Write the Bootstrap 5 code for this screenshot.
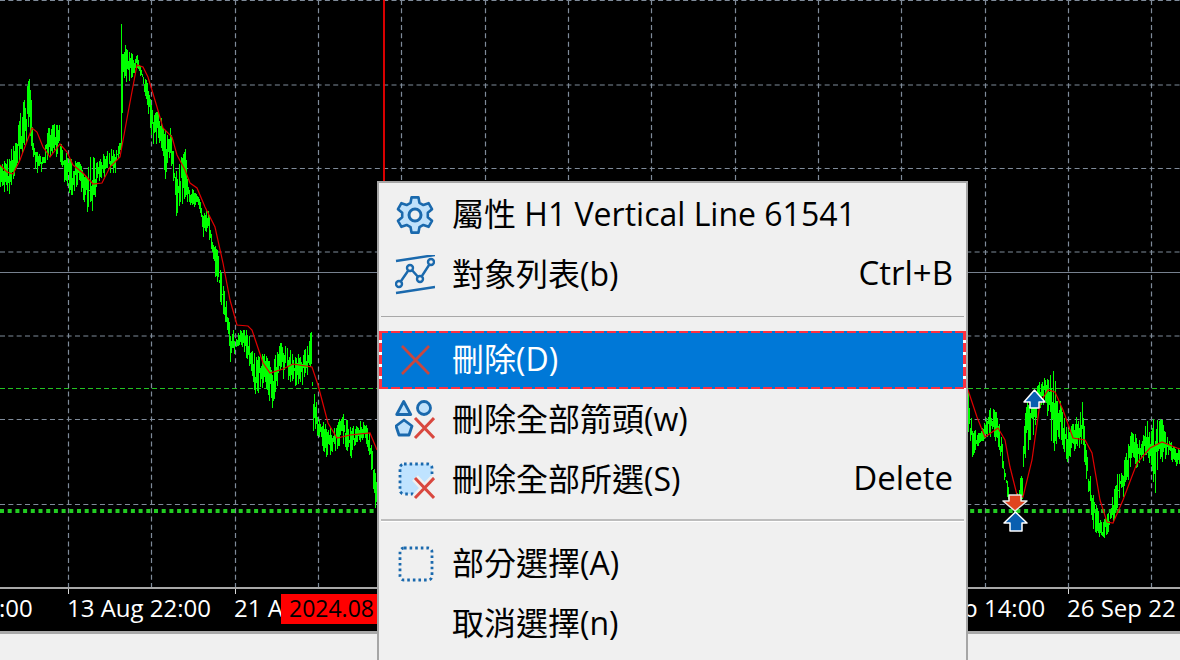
<!doctype html>
<html lang="zh-Hant">
  <head>
    <meta charset="utf-8">
    <meta name="viewport" content="width=device-width, initial-scale=1">
    <title>Chart context menu</title>
    <link href="https://cdn.jsdelivr.net/npm/bootstrap@5.3.0/dist/css/bootstrap.min.css" rel="stylesheet">
    <style>
      html, body { height: 660px; overflow: hidden; background: #f0f0f0; }
      .terminal { width: 1180px; height: 660px; }
      .plot-area { height: 587px; background: #000; }
      .plot-area svg { display: block; }
      .time-axis {
        height: 44px;
        background: #000;
        border-top: 2px solid #a8a8a8;
        color: #fff;
        font: 24px "Open Sans", "Liberation Sans", sans-serif;
      }
      .time-label { position: absolute; top: 1px; line-height: 36px; white-space: nowrap; }
      .time-tick { position: absolute; top: 0; width: 1px; height: 5px; background: #d8d8d8; }
      .time-cursor {
        position: absolute; left: 281px; top: 5px; width: 96px; height: 30px;
        background: #f00; color: #000; font-size: 23px; line-height: 28px; padding-left: 8px; white-space: nowrap;
      }
      .status-strip { height: 29px; border-top: 3px solid; border-image: linear-gradient(#a8a8a8 33%, #fff 33%) 1; background: #f0f0f0; }
      .context-menu {
        position: absolute; left: 377px; top: 181px; width: 591px; height: 479px;
        display: block; margin: 0; padding: 2px 0 0 0;
        background: #f0f0f0; border: 2px solid #a6a6a6; border-bottom: 0; border-radius: 0;
        font: 32px "Open Sans", "Noto Sans CJK TC", sans-serif;
      }
      .context-menu .dropdown-item {
        height: 60px; padding: 0 13px 0 16px; color: #000;
        display: flex; align-items: center;
      }
      .context-menu .dropdown-item.active {
        height: 58px; margin-bottom: 1px; color: #fff;
        background:
          repeating-linear-gradient(90deg, #ff3040 0 9px, transparent 9px 12px) top / 100% 2px no-repeat,
          repeating-linear-gradient(90deg, #ff3040 0 9px, transparent 9px 12px) bottom / 100% 2px no-repeat,
          repeating-linear-gradient(180deg, #ff3040 0 9px, #fff 9px 12px) left / 3px 100% no-repeat,
          repeating-linear-gradient(180deg, #ff3040 0 9px, #fff 9px 12px) right / 3px 100% no-repeat,
          #0078d7;
      }
      .context-menu .dropdown-divider { margin: 11px 2px 14px 2px; border-top: 1px solid #a8a8a8; opacity: 1; }
      .context-menu .divider-wide { margin: 9px 2px 12px 2px; border-top: 2px solid #bdbdbd; border-bottom: 1px solid #fff; }
      .menu-icon { width: 40px; height: 40px; flex: none; margin-right: 17px; }
      .menu-text { padding-bottom: 6px; }
      .menu-shortcut { margin-left: auto; padding-bottom: 6px; font-size: 33px; }
    </style>
  </head>
  <body>
    <div class="terminal position-relative d-flex flex-column">
      <div class="plot-area flex-shrink-0">
        <svg id="plot" width="1180" height="587" viewBox="0 0 1180 587">
          <g id="gridV" stroke="#7f8b9a" stroke-width="1.200" stroke-dasharray="5 3.330"></g>
          <g fill="none" stroke-width="1">
            <path d="M0 .5H1180M0 85H1180M0 168.5H1180M0 252H1180M0 336H1180M0 419.5H1180M0 504.5H1180" stroke="#7f8b9a" stroke-width="1.200" stroke-dasharray="5 3.330"/>
            <path d="M0 272.5H1180" stroke="#77818f"/>
            <path d="M0 388.5H1180" stroke="#22c322" stroke-dasharray="5 3"/>
            <path d="M0 511H1180" stroke="#22cc22" stroke-width="4" stroke-dasharray="4 3.700"/>
            <path d="M384 0V181" stroke="#f00000" stroke-width="1.800"/>
          </g>
          <path id="greenBars" fill="none" stroke="#00ff00" stroke-width="1" shape-rendering="crispEdges"/>
          <path id="redAvg" fill="none" stroke="#e00000" stroke-width="1.2"/>
          <g stroke="#fff" stroke-width="1.5" stroke-linejoin="round">
            <path d="M1034.500 390l10.500 12h-6v6h-9v-6h-6z" fill="#0a5fb0"/>
            <path d="M1009 495h12v6h6l-12 10-12-10h6z" fill="#e0451f" stroke="#e8e8e8"/>
            <path d="M1015.500 512l11.500 11h-5v8h-12v-8h-6z" fill="#0a5fb0"/>
          </g>
        </svg>
      </div>

      <div class="time-axis position-relative flex-shrink-0">
        <span class="time-tick" style="left: 68px"></span>
        <span class="time-tick" style="left: 235px"></span>
        <span class="time-tick" style="left: 1068px"></span>
        <span class="time-label" style="left: -1px">:00</span>
        <span class="time-label" style="left: 67px">13 Aug 22:00</span>
        <span class="time-label" style="left: 234px">21 A</span>
        <span class="time-cursor">2024.08</span>
        <span class="time-label" style="left: 963px">p 14:00</span>
        <span class="time-label" style="left: 1067px">26 Sep 22</span>
      </div>
      <div class="status-strip flex-shrink-0"></div>

      <ul class="dropdown-menu context-menu show list-unstyled">
        <li>
          <a class="dropdown-item" href="#">
            <svg class="menu-icon" viewBox="0 0 40 40" fill="none" stroke="#1a69ad" stroke-width="2.600" stroke-linejoin="round">
              <path fill="#bfe1fb" d="M15.550 7.780 16.570 2.330H23.430L24.450 7.780 28.360 10.040 33.590 8.190 37.020 14.140 32.800 17.740V22.260L37.020 25.860 33.590 31.810 28.360 29.960 24.450 32.220 23.430 37.670H16.570L15.550 32.220 11.640 29.960 6.410 31.810 2.980 25.860 7.200 22.260V17.740L2.980 14.140 6.410 8.190 11.640 10.040z"/>
              <circle cx="20" cy="20" r="6" fill="#f0f0f0" stroke-width="3"/>
            </svg>
            <span class="menu-text">屬性 H1 Vertical Line 61541</span>
          </a>
        </li>
        <li>
          <a class="dropdown-item" href="#">
            <svg class="menu-icon" viewBox="0 0 40 40" fill="none" stroke="#1a69ad" stroke-width="2.400">
              <path d="M1 6 40 0M1 38 40 32"/>
              <path d="M4 29 15 13 25 24 36 7"/>
              <g fill="#f0f0f0"><circle cx="4" cy="29" r="3"/><circle cx="15" cy="13" r="3"/><circle cx="25" cy="24" r="3"/><circle cx="36" cy="7" r="3"/></g>
            </svg>
            <span class="menu-text">對象列表(b)</span><span class="menu-shortcut">Ctrl+B</span>
          </a>
        </li>
        <li><hr class="dropdown-divider"></li>
        <li>
          <a class="dropdown-item active" href="#">
            <svg class="menu-icon" viewBox="0 0 40 40" fill="none" stroke="#c8473f" stroke-width="2.600">
              <path d="M7 6 34 34M34 6 7 34"/>
            </svg>
            <span class="menu-text">刪除(D)</span>
          </a>
        </li>
        <li>
          <a class="dropdown-item" href="#">
            <svg class="menu-icon" viewBox="0 0 40 40" fill="none" stroke-width="2.800">
              <g stroke="#1a69ad" stroke-linejoin="round">
                <path d="M8.700 1.500 15.700 14.500H1.700z" fill="#bfe1fb"/>
                <circle cx="29" cy="8" r="6.500" fill="#bfe1fb"/>
                <path d="M9 20 17 26 14 35H4L1 26z" fill="#bfe1fb"/>
              </g>
              <path d="M20 18 39 38M39 18 20 38" stroke="#d9483f" stroke-width="3"/>
            </svg>
            <span class="menu-text">刪除全部箭頭(w)</span>
          </a>
        </li>
        <li>
          <a class="dropdown-item" href="#">
            <svg class="menu-icon" viewBox="0 0 40 40" fill="none">
              <rect x="5" y="4" width="32" height="30" rx="4" fill="#bfe3ff" stroke="#1a69ad" stroke-width="2.800" stroke-dasharray="2.600 3"/>
              <path d="M19 38 40 38 40 18z" fill="#f0f0f0"/>
              <path d="M20 18 39 38M39 18 20 38" stroke="#f0f0f0" stroke-width="8"/>
              <path d="M20 18 39 38M39 18 20 38" stroke="#d9483f" stroke-width="3"/>
            </svg>
            <span class="menu-text">刪除全部所選(S)</span><span class="menu-shortcut">Delete</span>
          </a>
        </li>
        <li><hr class="dropdown-divider divider-wide"></li>
        <li>
          <a class="dropdown-item" href="#">
            <svg class="menu-icon" viewBox="0 0 40 40" fill="none">
              <rect x="5" y="4" width="32" height="32" rx="4" stroke="#1a69ad" stroke-width="2.800" stroke-dasharray="2.600 3"/>
            </svg>
            <span class="menu-text">部分選擇(A)</span>
          </a>
        </li>
        <li>
          <a class="dropdown-item" href="#">
            <span class="menu-icon"></span>
            <span class="menu-text">取消選擇(n)</span>
          </a>
        </li>
      </ul>
    </div>

    <script src="https://cdn.jsdelivr.net/npm/bootstrap@5.3.0/dist/js/bootstrap.bundle.min.js"></script>
    <script>
      // vertical grid, one every 83.33px
      let grid = '';
      for (let x = 68; x < 1180; x += 83.333) {
        const px = Math.round(x) + .5;
        grid += `<path d="M${px} 0V587"/>`;
      }
      document.getElementById('gridV').innerHTML = grid;

      // envelope [x, top, bottom], read off the screenshot
      const env = [
        [0,165,188],[8,153,197],[15,143,173],[20,113,163],[29,77,133],[32,110,157],[35,150,177],[43,157,170],
        [48,125,157],[59,124,157],[63,150,180],[71,157,198],[78,160,183],[85,173,213],[91,153,217],[97,162,187],
        [107,148,173],[115,150,173],[120,140,155],[121,22,150],[123,40,85],[128,52,83],[137,55,70],[142,72,80],[147,80,110],
        [153,110,147],[160,113,143],[165,130,180],[170,128,153],[175,160,220],[185,148,200],[188,183,203],
        [200,200,213],[203,210,237],[208,207,233],[212,238,260],[217,250,290],[222,277,310],[227,307,330],
        [230,330,362],[240,330,343],[248,330,363],[255,357,398],[263,353,387],[272,363,408],[280,342,377],
        [293,353,387],[302,355,385],[311,330,367],[313,387,437],[320,420,440],[325,423,458],[333,430,453],
        [342,413,443],[352,427,460],[358,423,443],[365,415,440],[370,437,460],[375,473,510],[377,490,515],
        [967,380,437],[972,427,457],[980,432,443],[990,407,437],[997,412,443],[1002,443,470],[1008,487,503],
        [1015,503,517],[1022,467,500],[1025,403,460],[1032,397,440],[1038,383,410],[1045,377,403],[1053,368,455],
        [1058,393,437],[1067,430,462],[1075,420,450],[1082,402,447],[1087,457,487],[1093,495,530],[1102,523,541],
        [1110,507,530],[1117,473,510],[1125,457,493],[1131,430,470],[1140,440,467],[1147,420,453],[1155,418,493],
        [1162,420,463],[1168,440,457],[1177,447,468],[1180,448,467]
      ];

      // small seeded random so every render comes out the same
      let seed = 61541;
      function rnd() {
        seed = (seed * 1664525 + 1013904223) >>> 0;
        return seed / 4294967296;
      }
      function lerpEnv(x) {
        for (let i = 1; i < env.length; i++) {
          if (x <= env[i][0]) {
            const a = env[i - 1], b = env[i];
            const t = (x - a[0]) / (b[0] - a[0] || 1);
            return [a[1] + (b[1] - a[1]) * t, a[2] + (b[2] - a[2]) * t];
          }
        }
        return env[env.length - 1].slice(1);
      }
      let bars = '';
      for (let x = 0; x < 1180; x++) {
        if (x > 377 && x < 967) continue;
        const [top, bot] = lerpEnv(x);
        const h = bot - top;
        // most columns stay in the body, a few reach the envelope as wicks
        const r1 = rnd(), r2 = rnd();
        const y1 = top + h * r1 * r1 * .55;
        const y2 = bot - h * r2 * r2 * .55;
        bars += `M${x + .5} ${y1.toFixed(0)}V${y2.toFixed(0)}`;
      }
      document.getElementById('greenBars').setAttribute('d', bars);

      // moving average
      const avgLeft = [[0,165],[7,172],[13,174],[20,160],[32,128],[37,132],[43,147],[50,157],[60,144],[67,152],[73,165],[83,173],[93,184],[102,183],[110,167],[120,157],[128,113],[137,65],[143,67],[148,77],[157,107],[163,128],[172,137],[177,155],[185,170],[190,183],[197,188],[205,207],[215,227],[223,263],[230,300],[237,325],[248,326],[252,330],[263,363],[270,373],[283,369],[293,364],[312,367],[318,385],[328,423],[337,438],[350,435],[370,433],[377,450]];
      const avgRight = [[967,387],[977,417],[985,437],[998,428],[1005,440],[1010,467],[1017,495],[1023,497],[1032,460],[1040,403],[1048,390],[1055,392],[1063,410],[1073,438],[1085,440],[1092,453],[1100,500],[1107,522],[1113,523],[1123,500],[1137,463],[1150,448],[1162,442],[1177,448],[1180,449]];
      const toPath = pts => 'M' + pts.map(p => p.join(' ')).join('L');
      document.getElementById('redAvg').setAttribute('d', toPath(avgLeft) + toPath(avgRight));
    </script>
  </body>
</html>
